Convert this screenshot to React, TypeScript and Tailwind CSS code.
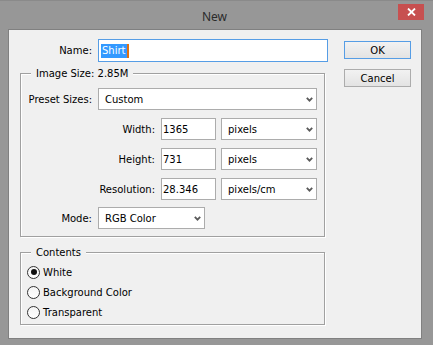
import React from "react"

const font = "font-['DejaVu_Sans','Liberation_Sans',sans-serif]"

const Chevron = () => (
  <svg width="7" height="5" viewBox="0 0 7 5" className="shrink-0">
    <polyline points="0.8,0.8 3.5,3.6 6.2,0.8" fill="none" stroke="#5a5a5a" strokeWidth="1.8" />
  </svg>
)

const Select = ({ value, w }: { value: string; w: string }) => (
  <div
    className={`${w} h-[22px] shrink-0 flex items-center justify-between pl-[6px] pr-[3px] bg-white border border-[#acacac] text-black`}
  >
    <span>{value}</span>
    <Chevron />
  </div>
)

const Field = ({ value, w }: { value: string; w: string }) => (
  <div className={`${w} h-[22px] shrink-0 flex items-center pl-[1px] bg-white border border-[#acacac] text-black`}>
    {value}
  </div>
)

const Group = ({ title, h, children }: { title: string; h: string; children: React.ReactNode }) => (
  <div
    className={`w-[305px] ${h} flex flex-col border border-[#a0a0a0] shadow-[inset_1px_1px_0_#fff,1px_1px_0_#fff]`}
  >
    <span className="-mt-[7px] ml-[10px] self-start h-[13px] leading-[13px] px-[5px] bg-[#f0f0f0] text-black">
      {title}
    </span>
    {children}
  </div>
)

const Radio = ({ label, checked }: { label: string; checked?: boolean }) => (
  <div className="h-[20px] flex items-center pl-[6px] gap-[3px]">
    <span className="w-[13px] h-[13px] rounded-full border border-[#333] bg-gradient-to-b from-[#f4f4f4] to-white flex items-center justify-center">
      {checked && <span className="w-[6px] h-[6px] rounded-full bg-[#111]" />}
    </span>
    <span>{label}</span>
  </div>
)

const Button = ({ label, focused }: { label: string; focused?: boolean }) => (
  <div
    className={`w-[67px] h-[18px] flex items-center justify-center border bg-gradient-to-b from-[#f2f2f2] to-[#e3e3e3] text-black ${
      focused ? "border-[#569de5]" : "border-[#acacac]"
    }`}
  >
    {label}
  </div>
)

export default function App() {
  return (
    <div className={`w-[433px] h-[345px] bg-[#979797] flex flex-col border-t border-[#8a8a8a] ${font} text-[10px]`}>
      {/* title bar */}
      <div className="h-[28px] grid grid-cols-[1fr_auto_1fr] items-start pr-[4px]">
        <div />
        <div className="pt-[8px] text-[12px] leading-[16px] text-[#2b2b2b] font-['Noto_Sans',sans-serif]">New</div>
        <div className="justify-self-end mt-[3px] mr-[5px] w-[26px] h-[16px] bg-[#c75050] flex items-center justify-center">
          <svg width="9" height="8" viewBox="0 0 9 8">
            <path d="M1 0.5 L8 7.5 M8 0.5 L1 7.5" stroke="#fff" strokeWidth="1.8" />
          </svg>
        </div>
      </div>

      {/* client area */}
      <div className="ml-[8px] w-[414px] h-[310px] bg-[#f0f0f0] border border-[#808080] flex">
        <div className="pl-[11px] pt-[9px] flex flex-col">
          <div className="flex items-center gap-[6px]">
            <span className="w-[72px] text-right">Name:</span>
            <div className="w-[230px] h-[23px] border border-[#569de5] bg-white flex items-center pl-[2px]">
              <span className="bg-[#3399ff] text-white leading-[14px] px-[1px]">Shirt</span>
              <span className="w-[2px] h-[14px] bg-[#e0700f]" />
            </div>
          </div>

          <div className="mt-[11px]">
            <Group title="Image Size: 2.85M" h="h-[164px]">
              <div className="mt-[8px] flex flex-col gap-[8px]">
                <div className="flex items-center gap-[6px]">
                  <span className="w-[71px] text-right">Preset Sizes:</span>
                  <Select value="Custom" w="w-[219px]" />
                </div>
                {[
                  ["Width:", "1365", "pixels"],
                  ["Height:", "731", "pixels"],
                  ["Resolution:", "28.346", "pixels/cm"],
                ].map(([l, v, u]) => (
                  <div key={l} className="flex items-center">
                    <span className="w-[134px] text-right">{l}</span>
                    <div className="ml-[6px]">
                      <Field value={v} w="w-[55px]" />
                    </div>
                    <div className="ml-[5px]">
                      <Select value={u} w="w-[96px]" />
                    </div>
                  </div>
                ))}
              </div>
              <div className="mt-[7px] flex items-center gap-[6px]">
                <span className="w-[71px] text-right">Mode:</span>
                <Select value="RGB Color" w="w-[107px]" />
              </div>
            </Group>
          </div>

          <div className="mt-[15px]">
            <Group title="Contents" h="h-[73px]">
              <div className="mt-[3px] flex flex-col">
                <Radio label="White" checked />
                <Radio label="Background Color" />
                <Radio label="Transparent" />
              </div>
            </Group>
          </div>
        </div>

        <div className="ml-[16px] pt-[11px] flex flex-col gap-[10px]">
          <Button label="OK" focused />
          <Button label="Cancel" />
        </div>
      </div>
    </div>
  )
}
